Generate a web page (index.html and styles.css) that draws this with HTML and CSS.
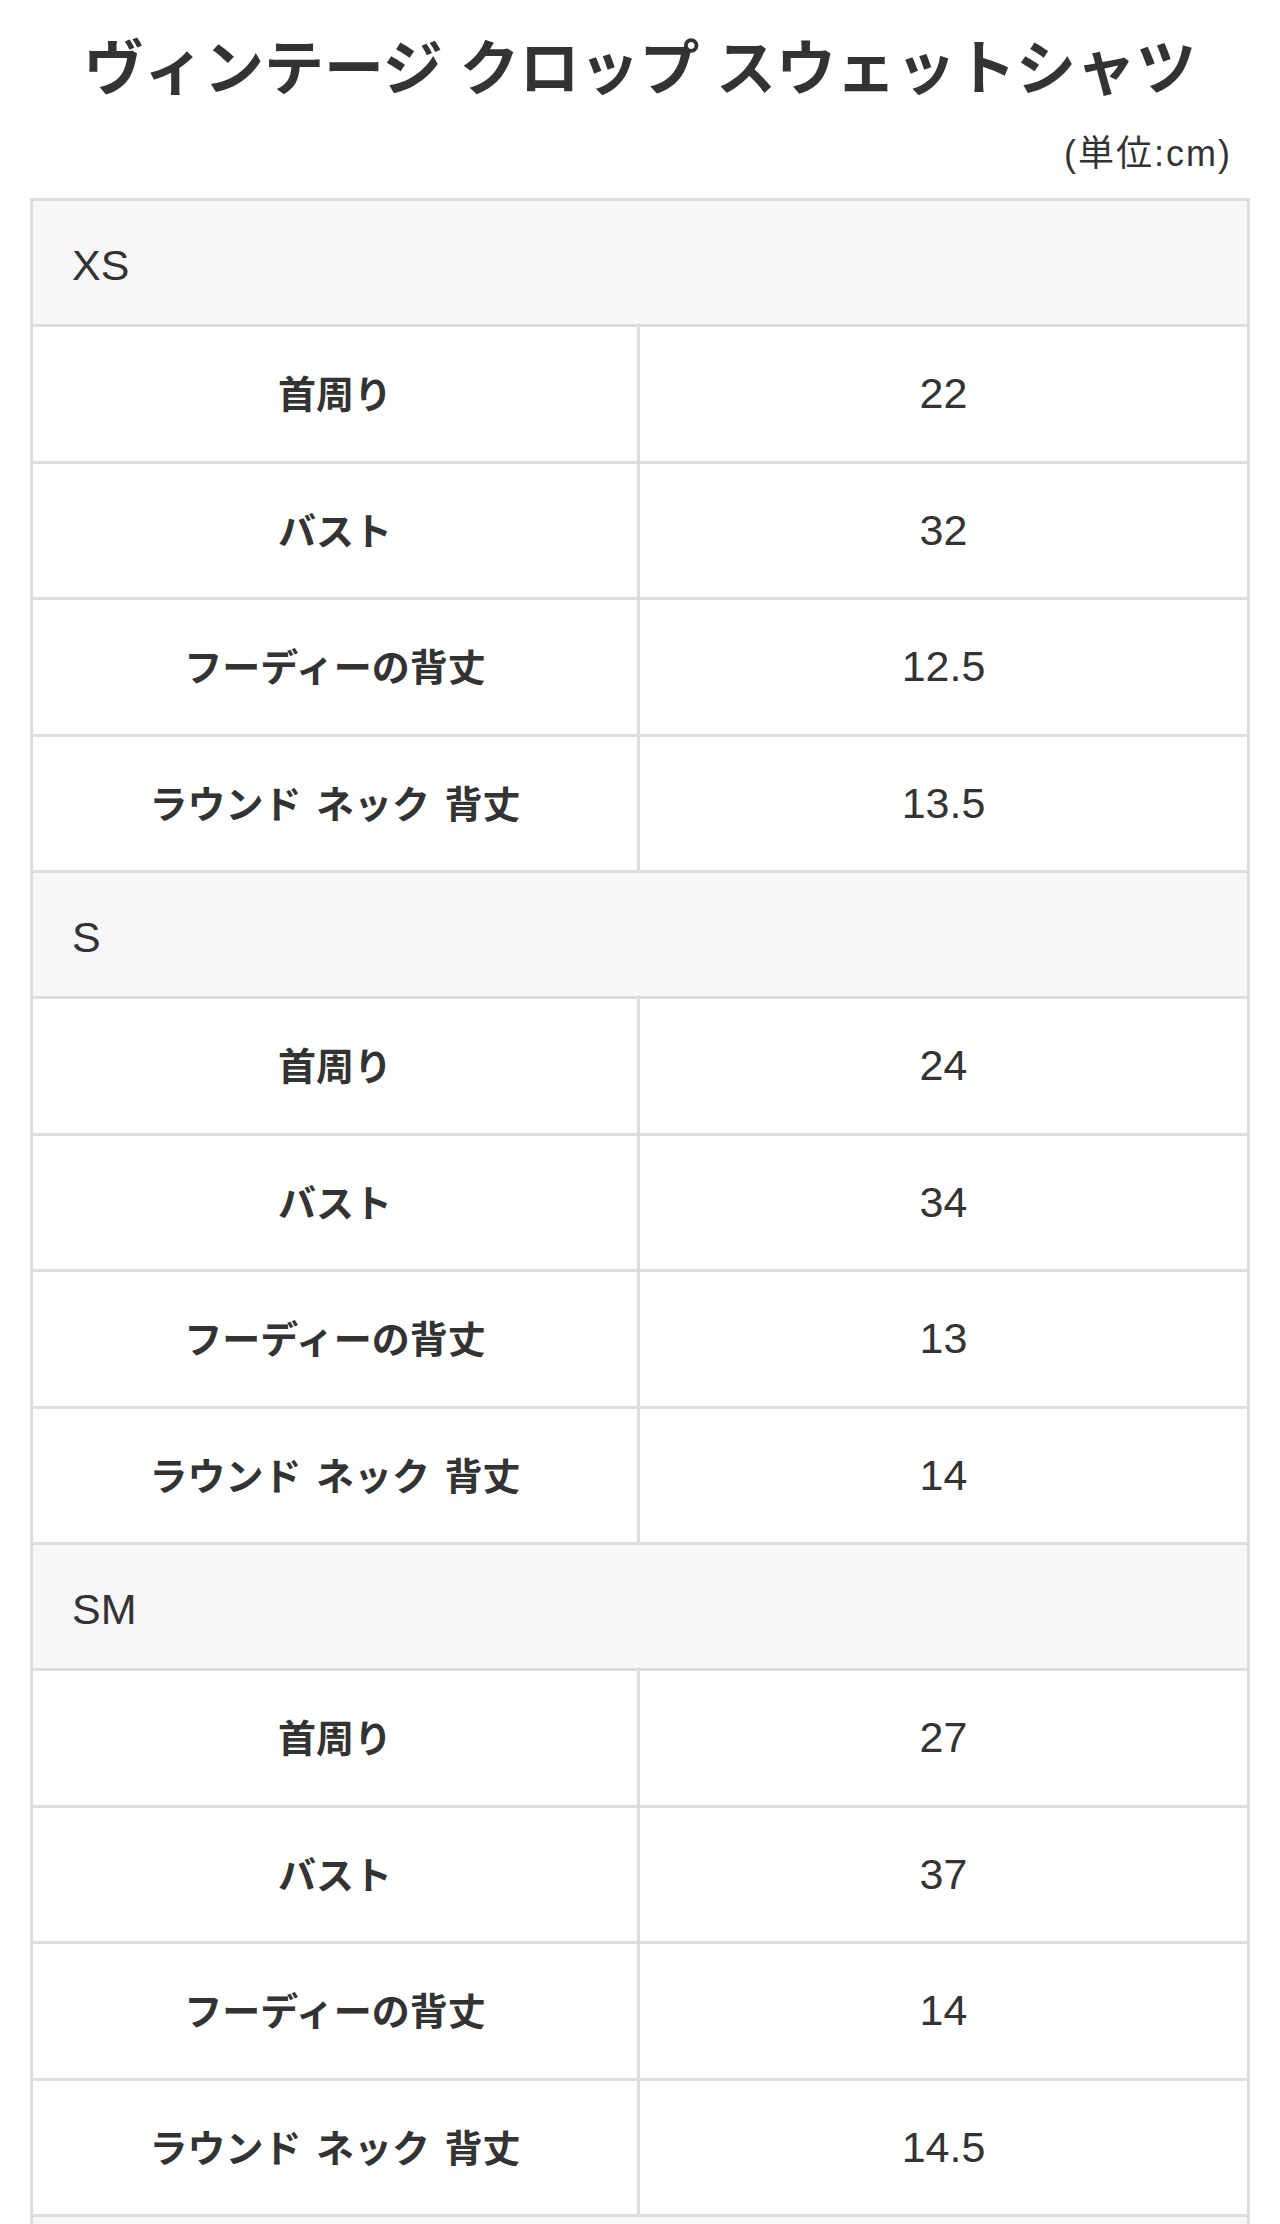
FILE: index.html
```html
<!DOCTYPE html>
<html lang="ja">
<head>
<meta charset="utf-8">
<title>サイズチャート</title>
<link rel="stylesheet" href="styles.css">
</head>
<body>
<div class="page">
  <h1 class="title">ヴィンテージ クロップ スウェットシャツ</h1>
  <p class="unit">(単位:cm)</p>
  <div class="chart">
    <div class="size-head">XS</div>
    <div class="row"><div class="label">首周り</div><div class="value">22</div></div>
    <div class="row"><div class="label">バスト</div><div class="value">32</div></div>
    <div class="row"><div class="label">フーディーの背丈</div><div class="value">12.5</div></div>
    <div class="row"><div class="label">ラウンド ネック 背丈</div><div class="value">13.5</div></div>

    <div class="size-head">S</div>
    <div class="row"><div class="label">首周り</div><div class="value">24</div></div>
    <div class="row"><div class="label">バスト</div><div class="value">34</div></div>
    <div class="row"><div class="label">フーディーの背丈</div><div class="value">13</div></div>
    <div class="row"><div class="label">ラウンド ネック 背丈</div><div class="value">14</div></div>

    <div class="size-head">SM</div>
    <div class="row"><div class="label">首周り</div><div class="value">27</div></div>
    <div class="row"><div class="label">バスト</div><div class="value">37</div></div>
    <div class="row"><div class="label">フーディーの背丈</div><div class="value">14</div></div>
    <div class="row"><div class="label">ラウンド ネック 背丈</div><div class="value">14.5</div></div>

    <div class="size-head"></div>
  </div>
</div>
</body>
</html>
```

FILE: styles.css
```css
html, body {
  margin: 0;
  padding: 0;
  background: #ffffff;
}

body {
  color: #333333;
  font-family: "Liberation Sans", "Noto Sans CJK JP", sans-serif;
}

.page {
  padding-top: 30px;
}

.title {
  margin: 0;
  font-size: 60px;
  line-height: 80px;
  font-weight: 700;
  text-align: center;
  color: #333333;
}

.unit {
  margin: 20px 0 20px;
  padding-right: 48px;
  text-align: right;
  font-size: 36px;
  line-height: 48px;
  letter-spacing: 2px;
}

.chart {
  margin: 0 30px;
  border: 3px solid #dddddd;
  border-bottom: 0;
}

.size-head {
  height: 123px;
  box-sizing: border-box;
  border-bottom: 3px solid #dddddd;
  background: #f7f7f9;
  display: flex;
  align-items: center;
  padding: 5px 0 0 39px;
  font-size: 43px;
}

.size-head {
  height: 126px;
}

.row {
  display: grid;
  grid-template-columns: 1fr 1fr;
  height: 136.5px;
  box-sizing: border-box;
  border-bottom: 3px solid #dddddd;
}

.label {
  border-right: 3px solid #dddddd;
  display: flex;
  align-items: center;
  justify-content: center;
  padding-bottom: 4px;
  font-weight: 700;
  font-size: 38px;
  word-spacing: 4px;
}

.value {
  display: flex;
  align-items: center;
  justify-content: center;
  font-size: 43px;
}
```
